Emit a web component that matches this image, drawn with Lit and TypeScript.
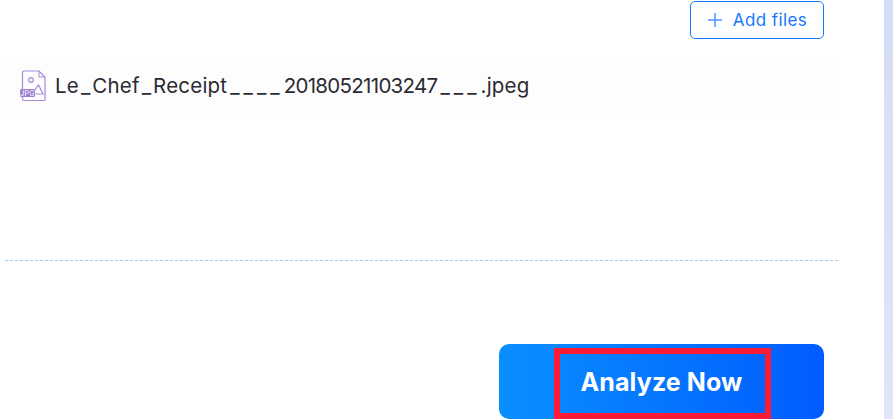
import { LitElement, html, css } from "lit";
import { customElement } from "lit/decorators.js";

@customElement("app-root")
export class AppRoot extends LitElement {
  static styles = css`
    :host {
      display: flex;
      width: 893px;
      height: 419px;
      overflow: hidden;
      background: #fff;
      font-family: Inter, "Liberation Sans", sans-serif;
    }
    .main {
      width: 884px;
      flex: none;
      display: flex;
      flex-direction: column;
      box-sizing: border-box;
      padding: 1px 0 0 5px;
    }
    .strip {
      flex: 1;
      background: linear-gradient(180deg, #d5ddf6, #e0e5f7);
    }
    .top {
      width: 819px;
      display: flex;
      justify-content: flex-end;
    }
    .add {
      width: 134px;
      height: 38px;
      box-sizing: border-box;
      border: 1px solid #1677ff;
      border-radius: 5px;
      display: flex;
      align-items: center;
      justify-content: center;
      gap: 10px;
      color: #1677ff;
      font-size: 17px;
      letter-spacing: 0.4px;
    }
    .add svg { display: block; }
    .file {
      width: 832px;
      height: 63px;
      margin: 17px 0 0 2px;
      box-sizing: border-box;
      padding: 0 0 4px 12px;
      background: #fdfdfe;
      display: flex;
      align-items: center;
      gap: 9px;
      color: #2b2b33;
      font-size: 20.5px;
      letter-spacing: 0.2px;
    }
    .s { margin-left: 2px; letter-spacing: 2px; }
    .u { margin-left: 3px; letter-spacing: 4px; }
    .d { letter-spacing: -0.7px; }
    .dash {
      width: 834px;
      height: 1px;
      margin-top: 141px;
      background: repeating-linear-gradient(90deg, #9ccdf6 0 3px, transparent 3px 5px);
    }
    .bottom {
      width: 819px;
      margin-top: 83px;
      display: flex;
      justify-content: flex-end;
    }
    .analyze {
      position: relative;
      width: 325px;
      height: 75px;
      border-radius: 10px;
      background: linear-gradient(90deg, #0a8fff, #005cff);
      color: #fff;
      font-size: 25px;
      font-weight: 700;
      letter-spacing: 0.1px;
      display: flex;
      align-items: center;
      justify-content: center;
    }
    .mark {
      position: absolute;
      left: 55px;
      top: 4px;
      width: 217px;
      height: 71px;
      box-sizing: border-box;
      border: 6px solid #ff1a35;
    }
  `;

  render() {
    return html`
      <div class="main">
        <div class="top">
          <div class="add">
            <svg width="16" height="16" viewBox="0 0 16 16" fill="none" stroke="#4d94ff" stroke-width="1.5">
              <path d="M8 1v14M1 8h14" />
            </svg>
            <span>Add files</span>
          </div>
        </div>
        <div class="file">
          <svg width="27" height="32" viewBox="0 0 27 32" fill="none">
            <path d="M3.500 2.500a1.500 1.500 0 0 1 1.500-1.500H20l6 6v22.500a1 1 0 0 1-1 1H5a1.500 1.500 0 0 1-1.500-1.500Z" stroke="#a68ad8" stroke-width="1.200" />
            <path d="M20 1v6h6" stroke="#a68ad8" stroke-width="1" />
            <circle cx="12" cy="10" r="2.300" stroke="#a68ad8" stroke-width="1.200" />
            <path d="M13 24l6.500-9 4.500 9Z" stroke="#a68ad8" stroke-width="1.200" />
            <rect x="1" y="19" width="15" height="8" rx="1.500" fill="#9b7fd0" />
            <text x="8.500" y="25.600" font-size="7" text-anchor="middle" fill="#fff" font-family="Inter, sans-serif">JPG</text>
          </svg>
          <span>Le<span class="s">_</span>Chef<span class="s">_</span>Receipt<span class="u">____</span><span class="d">20180521103247</span><span class="u">___</span>.jpeg</span>
        </div>
        <div class="dash"></div>
        <div class="bottom">
          <div class="analyze">
            <span>Analyze Now</span>
            <div class="mark"></div>
          </div>
        </div>
      </div>
      <div class="strip"></div>
    `;
  }
}
